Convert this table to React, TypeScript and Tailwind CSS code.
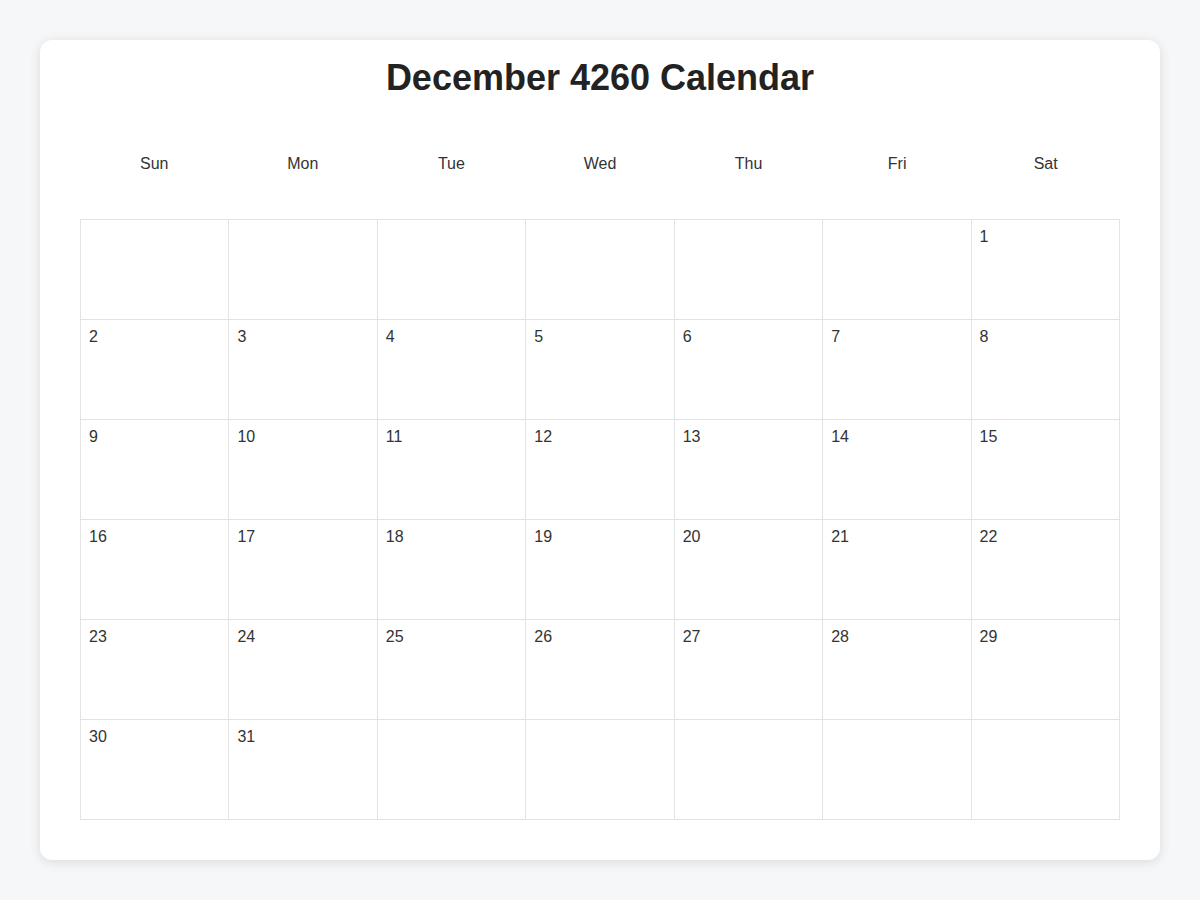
const days = ['Sun', 'Mon', 'Tue', 'Wed', 'Thu', 'Fri', 'Sat'];

// December 4260 starts on a Saturday
const cells: (number | null)[] = [
    ...Array(6).fill(null),
    ...Array.from({ length: 31 }, (_, i) => i + 1),
    ...Array(5).fill(null),
];

export default function App() {
    return (
        <div className="min-h-screen bg-[#f6f7f9] p-10 font-['Liberation_Sans',Arial,sans-serif]">
            <div className="rounded-xl bg-white px-10 pt-[18px] pb-10 shadow-[0_2px_12px_rgba(0,0,0,0.12)]">
                <h1 className="text-center text-4xl leading-10 font-bold text-[#222]">December 4260 Calendar</h1>

                <div className="mt-[54px] mb-[43px] grid grid-cols-7">
                    {days.map((d) => (
                        <div key={d} className="text-center text-base leading-6 text-[#333]">
                            {d}
                        </div>
                    ))}
                </div>

                <div className="grid grid-cols-7 border-t border-l border-[#e3e3e3]">
                    {cells.map((n, i) => (
                        <div key={i} className="h-[100px] border-r border-b border-[#e3e3e3] p-2 text-base leading-[17px] text-[#333]">
                            {n}
                        </div>
                    ))}
                </div>
            </div>
        </div>
    );
}
